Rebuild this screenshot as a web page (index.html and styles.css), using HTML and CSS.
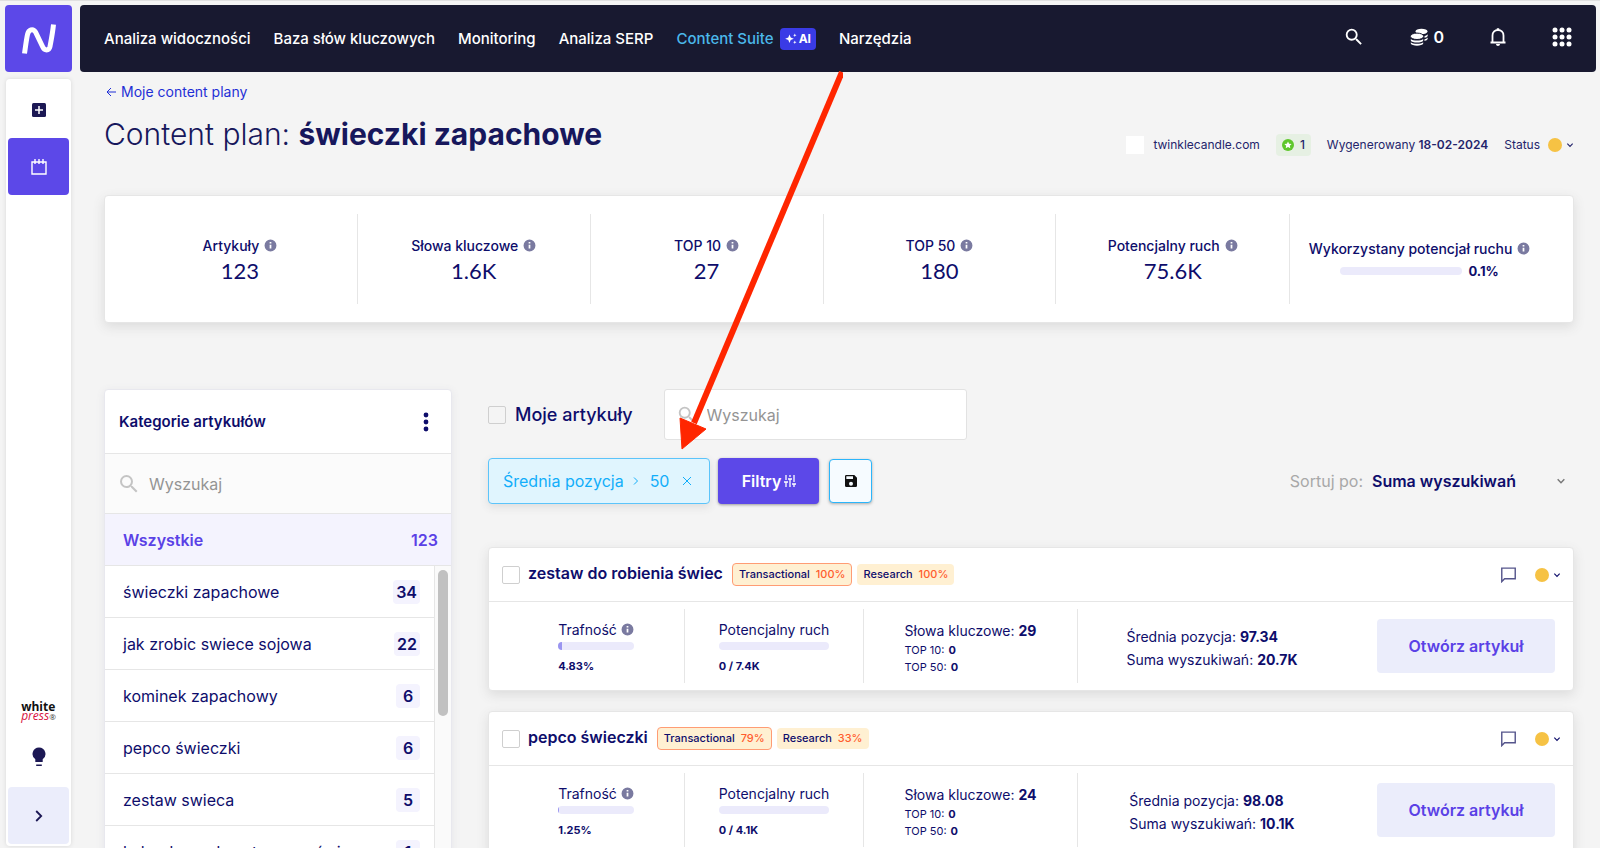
FILE: index.html
```html
<!DOCTYPE html>
<html lang="pl">
<head>
<meta charset="utf-8">
<meta name="viewport" content="width=device-width, initial-scale=1">
<title>Content plan: świeczki zapachowe</title>
<link rel="stylesheet" href="styles.css">
</head>
<body>
<svg class="sprite" aria-hidden="true">
  <symbol id="i-search" viewBox="0 0 24 24"><path d="M15.5 14h-.79l-.28-.27A6.47 6.47 0 0 0 16 9.5 6.5 6.5 0 1 0 9.5 16c1.61 0 3.09-.59 4.23-1.57l.27.28v.79l5 4.99L20.49 19l-4.99-5zm-6 0C7.01 14 5 11.99 5 9.5S7.01 5 9.5 5 14 7.01 14 9.5 11.99 14 9.5 14z"/></symbol>
  <symbol id="i-info" viewBox="0 0 24 24"><path d="M12 1a11 11 0 1 0 0 22 11 11 0 0 0 0-22zm1.6 16.500h-3.200v-7h3.200v7zm0-9h-3.200V5.500h3.200v3z"/></symbol>
  <symbol id="i-down" viewBox="0 0 24 24"><path d="M4 8l8 8 8-8" fill="none" stroke="currentColor" stroke-width="3.500"/></symbol>
  <symbol id="i-chat" viewBox="0 0 24 24"><path d="M21.500 3H2.500v19l4-4h15z" fill="none" stroke="currentColor" stroke-width="2"/></symbol>
</svg>

<div class="app">
  <a class="logo" href="#" aria-label="Strona główna">
    <svg viewBox="0 0 34 30" width="34" height="30"><path d="M2.500 29.500C4 19 4.500 15 5.500 10.500 6.500 5.500 11 4 13.500 8l7 14.500c2 4.500 6.500 4.500 7.500 0C29 17 30.500 10 31.500.5" fill="none" stroke="#fff" stroke-width="5"/></svg>
  </a>

  <header class="topbar">
    <nav class="nav">
      <a href="#">Analiza widoczności</a>
      <a href="#">Baza słów kluczowych</a>
      <a href="#">Monitoring</a>
      <a href="#">Analiza SERP</a>
      <a href="#" class="nav-current">Content Suite
        <span class="ai"><svg viewBox="0 0 12 12" width="12" height="12"><path d="M4.500 1.500l1.200 3.100 3.100 1.200-3.100 1.200-1.200 3.100-1.200-3.100L.2 5.800l3.100-1.200zM9.800.5l.5 1.200 1.200.5-1.200.5-.5 1.200-.5-1.200L8.100 2.200l1.200-.5zM9.800 7.500l.5 1.200 1.200.5-1.200.5-.5 1.200-.5-1.200-1.200-.5 1.200-.5z"/></svg>AI</span></a>
      <a href="#">Narzędzia</a>
    </nav>
    <div class="tools">
      <button aria-label="Szukaj"><svg width="22" height="22"><use href="#i-search"/></svg></button>
      <button class="coins"><svg viewBox="0 0 18 18" width="18" height="18"><ellipse cx="11.500" cy="3.500" rx="6" ry="2.700"/><path d="M14.500 8c1.600-.3 2.800-.9 3.200-1.800v1.700c-.3.900-1.500 1.500-3.200 1.900zM14.500 11.200c1.600-.3 2.800-.9 3.200-1.800v1.700c-.3.900-1.500 1.500-3.200 1.900z"/><ellipse cx="7" cy="8.300" rx="6.700" ry="3.200" stroke="#181930"/><path d="M.8 11c2.200 2 10.200 2 12.400 0v1.400c-.7 2.800-11.700 2.800-12.400 0zM.8 14.200c2.200 2 10.200 2 12.400 0v1.400c-.7 2.800-11.700 2.800-12.400 0z"/></svg>0</button>
      <button aria-label="Powiadomienia"><svg viewBox="0 0 18 20" width="18" height="20"><path d="M1.500 15.500h15M3.500 15V8.500C3.500 5 6 3 9 3s5.500 2 5.500 5.500V15" fill="none" stroke="#fff" stroke-width="1.800"/><path d="M7.800 3V1.200h2.400V3zM7 17h4c0 1.300-.9 2-2 2s-2-.7-2-2z"/></svg></button>
      <button aria-label="Aplikacje"><svg viewBox="0 0 20 20" width="20" height="20"><g><circle cx="3" cy="3" r="2.500"/><circle cx="10" cy="3" r="2.500"/><circle cx="17" cy="3" r="2.500"/><circle cx="3" cy="10" r="2.500"/><circle cx="10" cy="10" r="2.500"/><circle cx="17" cy="10" r="2.500"/><circle cx="3" cy="17" r="2.500"/><circle cx="10" cy="17" r="2.500"/><circle cx="17" cy="17" r="2.500"/></g></svg></button>
    </div>
  </header>

  <aside class="side">
    <button class="side-item" aria-label="Dodaj"><svg viewBox="0 0 14 14" width="14" height="14"><rect width="14" height="14" rx="1.500"/><path d="M7 3v8M3 7h8" stroke="#fff" stroke-width="1.500"/></svg></button>
    <button class="side-item side-active" aria-label="Content plan"><svg viewBox="0 0 16 16" width="16" height="16"><path d="M1 3h14v12H1zM4 0v5M8 0v5M12 0v5" fill="none" stroke="#fff" stroke-width="1.400"/></svg></button>
    <div class="side-bottom">
      <a class="wp" href="#"><b>white</b><i>press<small>®</small></i></a>
      <button class="side-tip" aria-label="Wskazówki"><svg viewBox="0 0 14 20" width="14" height="20"><path d="M7 .5A6.500 6.500 0 0 0 3.300 12.300V15h7.400v-2.700A6.500 6.500 0 0 0 7 .5zM4.200 17.500h5.600V19H4.200z"/></svg></button>
      <button class="side-item side-more" aria-label="Rozwiń"><svg viewBox="0 0 8 12" width="8" height="12"><path d="M1.200 1l5 5-5 5" fill="none" stroke="#1c1854" stroke-width="1.800"/></svg></button>
    </div>
  </aside>

  <main class="main">
    <a class="back" href="#"><svg viewBox="0 0 10 10" width="10" height="10"><path d="M10 5H1M5 1L1 5l4 4" fill="none" stroke="#1f2fd6"/></svg>Moje content plany</a>
    <div class="title-row">
      <h1>Content plan: <strong>świeczki zapachowe</strong></h1>
      <div class="meta">
        <span class="favicon"></span><span class="domain">twinklecandle.com</span>
        <span class="stars"><svg viewBox="0 0 12 12" width="12" height="12"><circle cx="6" cy="6" r="6" fill="#5fc72c"/><path d="M6 2.500l1.100 2.300 2.500.3-1.800 1.700.5 2.500L6 8.100 3.700 9.300l.5-2.500-1.800-1.700 2.500-.3z" fill="#fff"/></svg>1</span>
        <span class="date">Wygenerowany <b>18-02-2024</b></span>
        <button class="status">Status <span class="dot"></span><svg width="8" height="8"><use href="#i-down"/></svg></button>
      </div>
    </div>

    <section class="card stats">
      <div class="stat"><span class="stat-label">Artykuły <svg class="info"><use href="#i-info"/></svg></span><span class="num">123</span></div>
      <div class="stat"><span class="stat-label">Słowa kluczowe <svg class="info"><use href="#i-info"/></svg></span><span class="num">1.6K</span></div>
      <div class="stat"><span class="stat-label">TOP 10 <svg class="info"><use href="#i-info"/></svg></span><span class="num">27</span></div>
      <div class="stat"><span class="stat-label">TOP 50 <svg class="info"><use href="#i-info"/></svg></span><span class="num">180</span></div>
      <div class="stat"><span class="stat-label">Potencjalny ruch <svg class="info"><use href="#i-info"/></svg></span><span class="num">75.6K</span></div>
      <div class="stat"><span class="stat-label">Wykorzystany potencjał ruchu <svg class="info"><use href="#i-info"/></svg></span><span class="usage"><span class="bar bar-usage"></span><b>0.1%</b></span></div>
    </section>

    <div class="columns">
      <section class="cats">
        <div class="cats-head"><h2>Kategorie artykułów</h2><button aria-label="Więcej"><svg viewBox="0 0 6 20" width="6" height="20"><circle cx="3" cy="3" r="2.400"/><circle cx="3" cy="10" r="2.400"/><circle cx="3" cy="17" r="2.400"/></svg></button></div>
        <label class="cats-search"><svg width="24" height="24"><use href="#i-search"/></svg><input type="search" placeholder="Wyszukaj" aria-label="Wyszukaj kategorię"></label>
        <a class="cat-all" href="#">Wszystkie <span>123</span></a>
        <div class="cat-scroll">
          <ul class="cat-list">
            <li><a href="#">świeczki zapachowe <b>34</b></a></li>
            <li><a href="#">jak zrobic swiece sojowa <b>22</b></a></li>
            <li><a href="#">kominek zapachowy <b>6</b></a></li>
            <li><a href="#">pepco świeczki <b>6</b></a></li>
            <li><a href="#">zestaw swieca <b>5</b></a></li>
            <li><a href="#">kalendarz adwentowy ze świec <b>1</b></a></li>
          </ul>
          <div class="track"><div class="thumb"></div></div>
        </div>
      </section>

      <section class="articles">
        <div class="find">
          <label class="mine"><input type="checkbox">Moje artykuły</label>
          <label class="find-box"><svg width="22" height="22"><use href="#i-search"/></svg><input type="search" placeholder="Wyszukaj" aria-label="Wyszukaj artykuł"></label>
        </div>
        <div class="filters">
          <button class="chip"><span>Średnia pozycja</span><svg viewBox="0 0 6 10" width="6" height="10"><path d="M1 1.500L4.500 5 1 8.500"/></svg><span class="chip-val">50</span><svg class="chip-x" viewBox="0 0 10 10" width="10" height="10"><path d="M1 1l8 8M9 1L1 9"/></svg></button>
          <button class="filter-btn">Filtry<svg viewBox="0 0 12 14" width="12" height="14"><path d="M2 1v5M2 8v5M6 1v2M6 5v8M10 1v7M10 10v3M0 8h4M4 5h4M8 10h4" fill="none" stroke="#fff" stroke-width="1.300"/></svg></button>
          <button class="save-btn" aria-label="Zapisz"><svg viewBox="3 3 18 18" width="12" height="12"><path d="M17 3H5a2 2 0 0 0-2 2v14a2 2 0 0 0 2 2h14a2 2 0 0 0 2-2V7l-4-4zm-5 16a3 3 0 1 1 0-6 3 3 0 0 1 0 6zm3-10H5V5h10v4z"/></svg></button>
          <div class="sort"><label for="sort">Sortuj po:</label><div class="sort-box"><select id="sort"><option>Suma wyszukiwań</option></select><svg width="10" height="10"><use href="#i-down"/></svg></div></div>
        </div>

        <article class="card art">
          <div class="art-head">
            <input type="checkbox" id="a1"><label class="art-title" for="a1">zestaw do robienia świec</label>
            <span class="tag tag-main">Transactional <em>100%</em></span><span class="tag">Research <em>100%</em></span>
            <div class="art-tools"><button aria-label="Komentarz"><svg class="chat"><use href="#i-chat"/></svg></button><button class="state" aria-label="Status"><span class="dot"></span><svg width="8" height="8"><use href="#i-down"/></svg></button></div>
          </div>
          <div class="art-body">
            <div class="cell first"><div><p>Trafność <svg class="info"><use href="#i-info"/></svg></p><div class="bar"><div class="fill" style="width:4.83%"></div></div><b class="small">4.83%</b></div></div>
            <div class="cell"><div><p>Potencjalny ruch</p><div class="bar"></div><b class="small">0 / 7.4K</b></div></div>
            <div class="cell"><div class="kw"><p>Słowa kluczowe: <b>29</b></p><p class="sub">TOP 10: <b>0</b></p><p class="sub">TOP 50: <b>0</b></p></div></div>
            <div class="cell last"><div class="sum"><p>Średnia pozycja: <b>97.34</b></p><p>Suma wyszukiwań: <b>20.7K</b></p></div></div>
            <button class="open">Otwórz artykuł</button>
          </div>
        </article>

        <article class="card art">
          <div class="art-head">
            <input type="checkbox" id="a2"><label class="art-title" for="a2">pepco świeczki</label>
            <span class="tag tag-main">Transactional <em>79%</em></span><span class="tag">Research <em>33%</em></span>
            <div class="art-tools"><button aria-label="Komentarz"><svg class="chat"><use href="#i-chat"/></svg></button><button class="state" aria-label="Status"><span class="dot"></span><svg width="8" height="8"><use href="#i-down"/></svg></button></div>
          </div>
          <div class="art-body">
            <div class="cell first"><div><p>Trafność <svg class="info"><use href="#i-info"/></svg></p><div class="bar"><div class="fill" style="width:1.25%"></div></div><b class="small">1.25%</b></div></div>
            <div class="cell"><div><p>Potencjalny ruch</p><div class="bar"></div><b class="small">0 / 4.1K</b></div></div>
            <div class="cell"><div class="kw"><p>Słowa kluczowe: <b>24</b></p><p class="sub">TOP 10: <b>0</b></p><p class="sub">TOP 50: <b>0</b></p></div></div>
            <div class="cell last"><div class="sum"><p>Średnia pozycja: <b>98.08</b></p><p>Suma wyszukiwań: <b>10.1K</b></p></div></div>
            <button class="open">Otwórz artykuł</button>
          </div>
        </article>
      </section>
    </div>
  </main>
</div>

<svg class="pointer" viewBox="0 0 170 380" width="170" height="380" aria-hidden="true"><path d="M169 1L21 352" stroke="#ff2600" stroke-width="6"/><path d="M7 347l26 11L9 378z" fill="#ff2600" stroke="#ff2600"/></svg>
</body>
</html>
```
FILE: styles.css
```css
* { box-sizing: border-box; }

body {
  margin: 0;
  height: 100vh;
  overflow: hidden;
  background: #f4f4f4;
  border-top: 1px solid #e0e0e0;
  color: #0e0d6b;
  font-family: Inter, "Open Sans", sans-serif;
  font-size: 14px;
  line-height: 20px;
}

button, input, select { font: inherit; color: inherit; }
button { background: none; border: 0; padding: 0; display: flex; align-items: center; justify-content: center; }
a { color: inherit; text-decoration: none; }
h1, h2, p, ul { margin: 0; padding: 0; }
svg { display: block; flex: none; fill: currentColor; }
.sprite { position: absolute; width: 0; height: 0; }

.app {
  display: grid;
  grid-template-columns: 67px minmax(0, 1fr);
  grid-template-rows: 67px minmax(0, 1fr);
  gap: 6px 8px;
  height: 100%;
  padding: 4px 4px 2px 5px;
}

.logo { background: #5c48e8; border-radius: 4px; display: grid; place-items: center; }

.topbar {
  display: flex;
  align-items: center;
  justify-content: space-between;
  background: #181930;
  border-radius: 4px;
  padding: 0 24px;
  color: #fff;
}
.nav { display: flex; align-items: center; gap: 23px; font-size: 15px; font-weight: 500; white-space: nowrap; }
.nav-current { display: flex; align-items: center; gap: 6px; color: #4bb8ea; }
.ai { display: flex; align-items: center; gap: 2px; height: 22px; padding: 0 5px; border-radius: 4px; background: #3a3be6; color: #fff; font-size: 12px; font-weight: 700; }
.tools { display: flex; align-items: center; gap: 45px; padding-bottom: 4px; }
.coins { gap: 5px; font-size: 16px; font-weight: 600; }

.side {
  display: flex;
  flex-direction: column;
  align-items: center;
  margin: 1px 1px 0;
  padding: 2px;
  background: #fff;
  border-radius: 4px;
  box-shadow: 0 0 4px #d8d8d8;
  color: #1c1854;
}
.side-item { width: 100%; height: 57px; border-radius: 4px; }
.side-active { background: #5c48e8; }
.side-bottom { margin-top: auto; width: 100%; display: flex; flex-direction: column; align-items: center; }
.side-tip { height: 60px; }
.side-more { background: #ebedfb; }
.wp { display: block; margin-bottom: 6px; font: 12px/9px "Open Sans", sans-serif; color: #111; }
.wp b, .wp i { display: block; }
.wp i { color: #d8123f; }
.wp small { color: #333; font-size: 8px; line-height: 8px; }

.main { padding: 4px 22px 0 24px; min-width: 0; }
.back { display: inline-flex; align-items: center; gap: 5px; padding-left: 2px; color: #1f2fd6; font-size: 14px; line-height: 20px; }
.title-row { display: flex; justify-content: space-between; align-items: center; height: 64px; }
h1 { font-size: 30px; line-height: 36px; font-weight: 300; color: #17175c; white-space: nowrap; }
h1 strong { font-weight: 700; }

.meta { display: flex; align-items: center; padding-top: 22px; font-size: 12px; white-space: nowrap; color: #24246b; }
.favicon { width: 18px; height: 18px; margin-right: 9px; background: #fff; }
.stars { display: flex; align-items: center; gap: 6px; height: 22px; margin: 0 16px; padding: 0 6px; border-radius: 4px; background: #e6f0e3; font-weight: 500; }
.date b { font-weight: 600; }
.status { margin-left: 16px; gap: 4px; }
.dot { width: 14px; height: 14px; border-radius: 50%; background: #f6c244; }
.status .dot { margin-left: 4px; }

.card { background: #fff; border: 1px solid #e6e6e6; border-radius: 4px; box-shadow: 0 4px 12px #dcdcdc; }

.stats { display: grid; grid-template-columns: 252fr 233fr 233fr 233fr 234fr 284fr; margin-top: 29px; padding: 18px 0; }
.stat { display: flex; flex-direction: column; align-items: center; justify-content: center; height: 90px; border-left: 1px solid #e6e6e6; padding-top: 3px; }
.stat:first-child { border-left: 0; padding-left: 18px; }
.stat:last-child { padding-right: 24px; }
.stat-label { display: flex; align-items: center; gap: 5px; font-weight: 500; white-space: nowrap; }
.info { width: 13px; height: 13px; color: #7a7aa0; }
.num { font-family: Lato, sans-serif; font-size: 22px; line-height: 30px; }
.usage { display: flex; align-items: center; gap: 6px; line-height: 24px; font-size: 13px; }
.usage b { font-weight: 700; }
.bar { height: 8px; border-radius: 4px; background: #ebeafb; overflow: hidden; }
.bar-usage { width: 122px; }
.fill { height: 100%; background: #9a95f0; }

.columns { display: grid; grid-template-columns: 348px minmax(0, 1fr); gap: 36px; margin-top: 66px; align-items: start; }

.cats { background: #fff; border: 1px solid #e8e8ee; border-radius: 4px; box-shadow: 0 2px 8px #e4e4e8; }
.cats-head { display: flex; justify-content: space-between; align-items: center; height: 64px; padding: 0 22px 0 14px; border-bottom: 1px solid #e6e6e6; }
h2 { font-size: 15px; font-weight: 600; }
.cats-search { display: flex; align-items: center; gap: 8px; height: 60px; padding: 0 12px; background: #fbfbfb; border-bottom: 1px solid #e6e6e6; }
.cats-search svg, .find-box svg { color: #c4c4c4; }
input[type="search"] { flex: 1; min-width: 0; border: 0; padding: 0; background: none; font-size: 16px; outline: 0; }
input::placeholder { color: #949494; opacity: 1; }
.cat-all { display: flex; justify-content: space-between; align-items: center; height: 52px; padding: 0 13px 0 18px; background: #f4f3fe; border-bottom: 1px solid #e6e6e6; color: #5a41e6; font-size: 16px; font-weight: 600; }
.cat-scroll { display: grid; grid-template-columns: minmax(0, 1fr) 16px; }
.cat-list { list-style: none; border-right: 1px solid #e6e6e6; font-size: 16px; }
.cat-list a { display: flex; justify-content: space-between; align-items: center; height: 52px; padding: 0 14px 0 18px; border-bottom: 1px solid #e6e6e6; white-space: nowrap; }
.cat-list b { min-width: 24px; padding: 0 3px; border-radius: 4px; background: #f4f3fe; text-align: center; line-height: 24px; font-weight: 600; }
.track { padding: 4px 3px; background: #fafafa; }
.thumb { height: 146px; border-radius: 5px; background: #c1c1c1; }

input[type="checkbox"] { appearance: none; width: 18px; height: 18px; margin: 0; border: 1px solid #cfcfcf; border-radius: 2px; flex: none; }
.find { display: flex; align-items: center; gap: 31px; }
.mine { display: flex; align-items: center; gap: 9px; font-size: 18px; font-weight: 500; white-space: nowrap; }
.find-box { display: flex; align-items: center; gap: 9px; width: 303px; height: 51px; padding: 0 11px; background: #fff; border: 1px solid #e2e2e2; border-radius: 3px; }

.filters { display: flex; align-items: center; height: 46px; margin-top: 18px; }
.chip { height: 46px; gap: 9px; padding: 0 17px 0 14px; border: 1px solid #5cc4fa; border-radius: 4px; background: #e0f5fe; color: #12aefa; font-size: 16px; box-shadow: 0 3px 8px #dddddd; white-space: nowrap; }
.chip svg { fill: none; stroke: currentColor; }
.chip-val { margin: 0 4px 0 2px; }
.filter-btn { width: 101px; height: 46px; margin: 0 10px 0 8px; gap: 3px; border-radius: 4px; background: #5c48e8; color: #fff; font-size: 16px; font-weight: 600; box-shadow: 0 1px 3px #999; }
.save-btn { width: 43px; height: 44px; border: 1px solid #2bb5fa; border-radius: 4px; background: #f6fbff; color: #111; box-shadow: 0 1px 3px #aaa; }
.sort { display: flex; align-items: center; gap: 9px; margin-left: auto; font-size: 16px; color: #a8a8a8; white-space: nowrap; }
.sort-box { display: flex; align-items: center; padding-right: 8px; }
.sort select { appearance: none; width: 184px; padding: 0; border: 0; background: none; color: #0e0d6b; font-weight: 600; }
.sort-box svg { color: #777; }

.art { margin-top: 20px; }
.filters + .art { margin-top: 43px; }
.art-head { display: flex; align-items: center; height: 54px; padding: 0 12px 0 13px; border-bottom: 1px solid #e6e6e6; }
.art-title { margin: 0 9px 4px 8px; font-size: 16px; font-weight: 600; white-space: nowrap; }
.tag { margin-right: 5px; padding: 0 6px; border-radius: 4px; background: #fff0d2; font-size: 11px; line-height: 21px; font-weight: 500; white-space: nowrap; }
.tag-main { border: 1px solid #ff9c74; }
.tag em { margin-left: 3px; font-style: normal; color: #ff5d2e; }
.art-tools { display: flex; align-items: center; gap: 18px; margin-left: auto; }
.chat { width: 17px; height: 17px; color: #55558c; }
.state { gap: 4px; }

.art-body { display: grid; grid-template-columns: 196fr 179fr 214fr 279fr 216fr; align-items: center; padding: 7px 0; }
.cell { display: grid; place-items: center; height: 74px; padding-top: 3px; border-right: 1px solid #e6e6e6; white-space: nowrap; }
.cell.first { padding-left: 19px; }
.cell.last { border-right: 0; padding-right: 11px; }
.cell p { display: flex; align-items: center; gap: 4px; }
.cell b { font-weight: 700; }
.cell .bar { margin: 2px 0 6px; }
.small { display: block; font-size: 11px; }
.kw p { line-height: 22px; }
.kw .sub { font-size: 11px; line-height: 17px; }
.sum p { line-height: 23px; }
.open { justify-self: stretch; height: 54px; margin: 0 18px 0 20px; border-radius: 4px; background: #ebedfb; color: #5a41e6; font-size: 16px; font-weight: 600; white-space: nowrap; }

/* annotation arrow drawn over the page */
.pointer { position: absolute; left: 673px; top: 71px; fill: none; pointer-events: none; }
```
